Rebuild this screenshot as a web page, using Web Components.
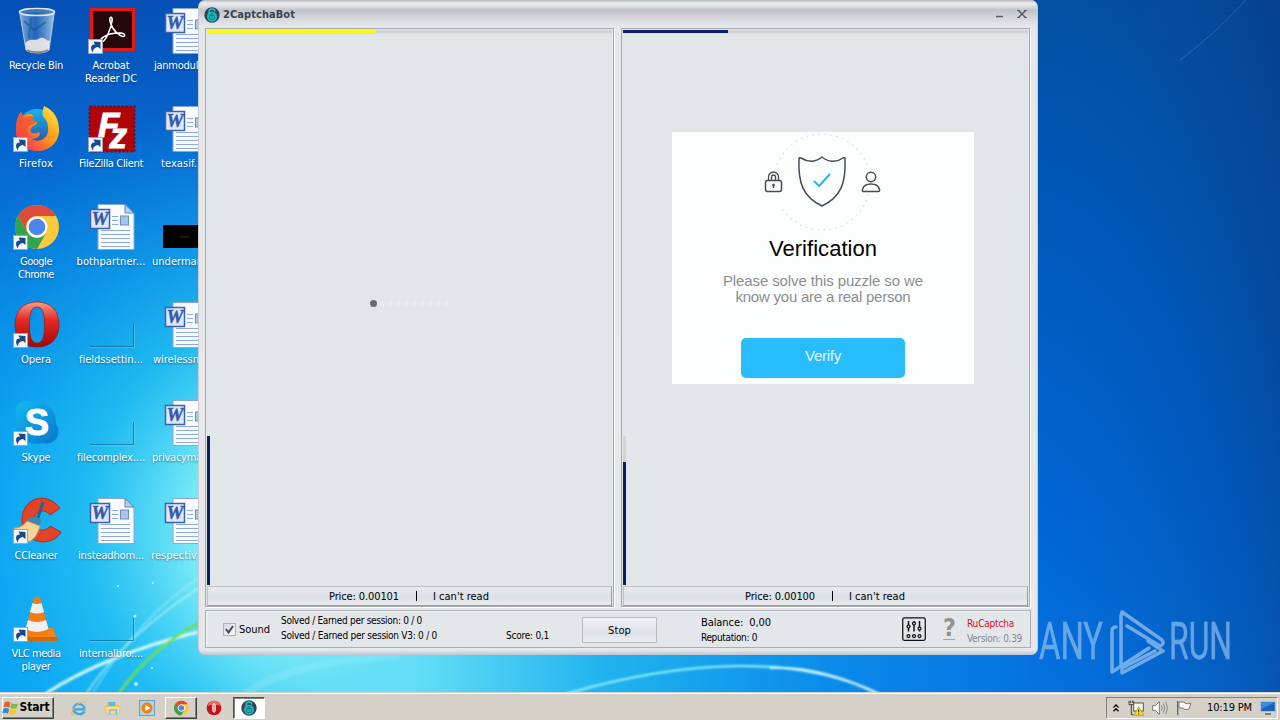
<!DOCTYPE html>
<html lang="en">
<head>
<meta charset="utf-8">
<title>Desktop</title>
<style>
    html, body {
        margin: 0;
        height: 100%;
        overflow: hidden;
        font-family: "DejaVu Sans Condensed", "DejaVu Sans", sans-serif;
        font-size: 11px;
        font-stretch: condensed;
    }
</style>
</head>
<body>
<win-desktop></win-desktop>

<script>
const shortcut = `
    <rect x="1.5" y="32.5" width="14" height="14" fill="#f4f6f9" stroke="#9aa6b5"/>
    <path d="M6 45.500 C2.500 41 4 37 8 37.500 L6.500 34.500 L13.500 35 L13.500 42 L11 40 C8 40.500 6 42 6 45.500 Z" fill="#164a8c"/>`;

const wordDoc = `
    <path d="M11 1.5 H38 L47 10 V46.5 H11 Z" fill="#f8fbff" stroke="#89a5d8"/>
    <path d="M38 1.5 V10 H47 Z" fill="#b9cdec" stroke="#6482b8"/>
    <rect x="33.500" y="13" width="8" height="9" fill="#a9c4e9" stroke="#6f8dc5"/>
    <path d="M25 13.5 H31 M25 17.500 H31 M25 21.500 H31 M14 27.500 H43 M14 31.500 H43 M14 35.500 H43 M14 39.500 H43 M14 43.500 H43" stroke="#8da9df"/>
    <rect x="3.500" y="6.500" width="19" height="19" fill="#dfe8f8" stroke="#3c5fae" stroke-width="1.500"/>
    <text x="4.500" y="22" textLength="17" lengthAdjust="spacingAndGlyphs" font-family="Liberation Serif, serif" font-size="18" font-weight="700" font-style="italic" fill="#3358a8" stroke="#3358a8" stroke-width=".4">W</text>`;

const blank = `
    <path d="M3 45.500 H46.500 V23" fill="none" stroke="#06517e" stroke-opacity=".6"/>
    <path d="M3 46.500 H47.500 V23" fill="none" stroke="#a2e8ff" stroke-opacity=".3"/>`;

const chrome = `
    <circle cx="25" cy="24" r="22" fill="#fbc93c"/>
    <path d="M5.9 13 A22 22 0 0 1 44.1 13 H25 A11 11 0 0 0 15.500 29.500 Z" fill="#df4b3b"/>
    <path d="M5.900 13 A22 22 0 0 0 25 46 L34.500 29.500 A11 11 0 0 1 15.500 29.500 Z" fill="#33a352"/>
    <circle cx="25" cy="24" r="10.500" fill="#fff"/><circle cx="25" cy="24" r="8.300" fill="#4c86ec"/>`;

const opera = `
    <defs><linearGradient id="o" x2="0" y2="1"><stop stop-color="#ff9a8b"/><stop offset=".4" stop-color="#e32a22"/><stop offset="1" stop-color="#9d0808"/></linearGradient></defs>
    <path fill-rule="evenodd" fill="url(#o)" stroke="#8e1010" stroke-width=".6" d="M25 1 C39 1 47 10 47 24 C47 38 39 46 25 46 C11 46 3 38 3 24 C3 10 11 1 25 1 Z M25 6 C19 6 17.500 13 17.500 24 C17.500 35 19 42 25 42 C31 42 32.500 35 32.500 24 C32.500 13 31 6 25 6 Z"/>`;

const lockBot = `
    <circle cx="24" cy="24" r="23" fill="#304550"/>
    <path d="M15 22 V16 A9 9 0 0 1 33 14 M17 22 V17" fill="none" stroke="#18c7cf" stroke-width="4"/>
    <circle cx="24" cy="29" r="15" fill="#18bcc5"/>
    <path d="M17 25 H31 V37 H17 Z M21 25 V20 H28 M24 29 V33" fill="none" stroke="#176a75" stroke-width="2.500"/>`;

const icons = {
    bin: `
        <defs><linearGradient id="g"><stop stop-color="#a9c8e5" stop-opacity=".8"/><stop offset=".45" stop-color="#3b79c0" stop-opacity=".5"/><stop offset="1" stop-color="#c3d8ea" stop-opacity=".85"/></linearGradient></defs>
        <path d="M7.500 4 H42.500 L37 43 C33 47 18 47 14 43 Z" fill="url(#g)" stroke="#b6cade"/>
        <path d="M13 36 C19 30 23 35 28 31 C33 30 34 34 38 34 L37 43 C33 47 18 47 14 43 Z" fill="#eeeae4" fill-opacity=".9"/>
        <path d="M15 43 C20 46 31 46 36 43" fill="none" stroke="#8b8375" stroke-width="2"/>
        <ellipse cx="25" cy="5" rx="17.500" ry="3.500" fill="#31679d" fill-opacity=".6" stroke="#dde9f2" stroke-width="1.500"/>
        <path d="M12 14 L22 23 L34 15 M19 11 L17 31" stroke="#164a85" stroke-opacity=".5" fill="none" stroke-width="2"/>`,
    acrobat: `
        <rect x="4.500" y="2.500" width="42" height="40" fill="#26070b" stroke="#e51a12" stroke-width="3"/>
        <path d="M15 35 C11 35 14 30 23 27 C32 25 39 26 37.500 29 C35 31 25 24 23 14 C22 9 26 9 25 14 C24 21 19 34 15 35 Z" fill="none" stroke="#fff" stroke-width="1.600"/>${shortcut}`,
    word: wordDoc,
    blank,
    firefox: `
        <defs><linearGradient id="f" x1="1" x2="0" y2="1"><stop stop-color="#fff342"/><stop offset=".45" stop-color="#ff9a18"/><stop offset="1" stop-color="#ed1766"/></linearGradient><linearGradient id="h" x2="0" y2="1"><stop stop-color="#14b6e8"/><stop offset="1" stop-color="#2948a9"/></linearGradient></defs>
        <circle cx="25" cy="23" r="19" fill="url(#h)"/>
        <path d="M32 1 C42 5 47 14 47 25 C47 38 37 46 25 46 C12 46 3 37 4 24 C4 16 6 10 9 7 C10 10 11 11 12 11 C16 8 19 9 22 11 L20 15 L25 17 C25 21 20 20 19 24 C17 27 21 30 27 27 C30 31 24 34 20 34 C27 39 38 33 36 22 C36 17 33 14 31 11 C30 7 31 4 32 1 Z" fill="url(#f)"/>
        <path d="M5 30 C3 20 5 12 9 7 L12 12 L22 11 L20 15 L25 17 L20 20 C11 22 16 32 24 34" fill="#f14b35" fill-opacity=".7"/>${shortcut}`,
    filezilla: `
        <rect x="2.500" y="1.500" width="45" height="45" fill="#b00609" stroke="#7b0508" stroke-width="2" stroke-dasharray="2 2"/>
        <text x="11" y="32" font-family="Liberation Sans, sans-serif" font-size="35" font-weight="700" font-style="italic" fill="#fff" stroke="#fff">F<tspan dx="-10" dy="11">z</tspan></text>${shortcut}`,
    chrome: chrome + shortcut,
    chromeMini: chrome,
    opera: opera + shortcut,
    operaMini: `
        <circle cx="24" cy="24" r="22" fill="#c5121a"/><path d="M6 18 A18 15 0 0 1 42 18 Q24 10 6 18" fill="#ee6b62"/>
        <ellipse cx="24" cy="24" rx="5.500" ry="14" fill="#fff"/><path d="M24 14 V34" stroke="#c94040" stroke-width="3"/>`,
    skype: `
        <defs><linearGradient id="s" x2="1" y2="1"><stop stop-color="#14b9f1"/><stop offset="1" stop-color="#0676cf"/></linearGradient></defs>
        <path d="M4 12 C4 4 12 0 20 3 C34 1 45 12 44 25 C50 34 44 47 31 44 C15 48 2 36 5 21 C4 18 3 15 4 12 Z" fill="url(#s)"/>
        <text x="13" y="36" font-family="Liberation Sans, sans-serif" font-size="36" font-weight="700" fill="#fff" stroke="#fff">S</text>${shortcut}`,
    black: `<rect x="1" y="22" width="47" height="23"/><path d="M18 34 H27" stroke="#303030"/>`,
    ccleaner: `
        <path d="M48 11 C38 -2 20 -2 13 11 C5 26 13 43 30 45 C39 45 46 41 49 35 L38 29 C33 36 23 34 22 25 C21 15 32 10 38 18 Z" fill="#e04327" stroke="#b52c19"/>
        <path d="M31 5 L26 21" stroke="#28628b" stroke-width="3"/><path d="M17 21 Q23 17 29 23 L28 29 L14 25 Z" fill="#3f87ad"/>
        <path d="M15 24 L28 29 C25 40 20 44 16 45 L2 31 C8 31 12 28 15 24 Z" fill="#f3d49a" stroke="#c89b5c"/>${shortcut}`,
    vlc: `
        <path d="M9 33 H41 L46 46 H12 L6 41 Z" fill="#f28413"/><path d="M9 42 H46 V46 H12 Z" fill="#d66607"/>
        <path d="M22 3 Q25 0 28 3 L37 36 Q25 44 13 36 Z" fill="#f47b0d"/>
        <path d="M20.500 8 Q25 10 29.500 8 L32 17 Q25 20 18 17 Z M16 25 Q25 29 34 25 L36.500 34 Q25 40 13.500 34 Z" fill="#eef0f1"/>${shortcut}`,
    flag: `
        <path d="M5 7 Q14 2 22 8 L19 23 Q11 18 2 22 Z" fill="#f05a28"/><path d="M25 10 Q34 15 45 10 L41 24 Q32 29 22 24 Z" fill="#80bd32"/>
        <path d="M1 26 Q10 22 18 27 L15 41 Q8 36 -2 40 Z" fill="#2e88d6"/><path d="M21 28 Q30 33 40 28 L37 42 Q28 47 18 42 Z" fill="#f9c51e"/>`,
    ie: `
        <path d="M40 34 C32 48 8 43 8 26 C8 7 40 7 40 28 H12" fill="none" stroke="#3fa7e3" stroke-width="7"/>
        <path d="M8 42 C-5 50 4 25 21 13 C35 3 49 -1 44 14" fill="none" stroke="#eebd37" stroke-width="3"/>`,
    folder: `
        <path d="M3 8 H18 L22 13 H43 V39 H3 Z" fill="#edcc67"/><path d="M10 6 H31 V20 H10 Z" fill="#63b6db"/>
        <path d="M2 19 H45 L43 42 H5 Z" fill="#f8df8d" stroke="#cfaa4c"/><path d="M14 45 V30 H34 V45" fill="none" stroke="#76bee5" stroke-width="5"/>`,
    media: `
        <rect x="2" y="2" width="44" height="44" fill="#b5dbf1" stroke="#5596c4" stroke-width="3"/>
        <circle cx="24" cy="24" r="17" fill="#f08314"/><path d="M19 14 L34 24 L19 34 Z" fill="#fff"/>`,
    lockBot,
    chevron: `<path d="M14 22 L24 12 L34 22 M14 37 L24 27 L34 37" fill="none" stroke="#000" stroke-width="5"/>`,
    network: `
        <path d="M3 3 V14 H17 V3 M7 2 V9 M13 2 V9 M10 15 V44 H17" fill="none" stroke="#444" stroke-width="3"/>
        <rect x="17" y="9" width="29" height="24" fill="#f5f5f5" stroke="#555" stroke-width="3"/>
        <path d="M32 20 L47 46 H17 Z" fill="#ffdc25" stroke="#a88a00" stroke-width="2"/><path d="M32 28 V37 M32 40 V43" stroke="#222" stroke-width="3"/>`,
    speaker: `
        <path d="M2 17 H10 L22 5 V43 L10 31 H2 Z" fill="#fff" stroke="#777" stroke-width="3"/>
        <path d="M28 16 Q34 24 28 32 M34 10 Q43 24 34 38 M40 5 Q52 24 40 43" fill="none" stroke="#8a8a8a" stroke-width="3"/>`,
    action: `<path d="M5 3 V46" stroke="#666" stroke-width="4"/><path d="M9 6 H25 L28 11 H45 L38 28 H24 L21 24 H9 Z" fill="#fff" stroke="#777" stroke-width="3"/>`,
    screen: `<path d="M2 5 H46 V35 H2 Z" fill="#1962bd" stroke="#b6cde1" stroke-width="3"/><path d="M4 7 H44 L4 27 Z" fill="#3f8ddf"/><path d="M15 42 H33" stroke="#555" stroke-width="4"/>`,
    sliders: `
        <rect x="1.500" y="1.500" width="45" height="45" rx="3" fill="none" stroke="#111" stroke-width="2.500"/>
        <path d="M13 8 V29 M24 8 V29 M35 8 V29" stroke="#111" stroke-width="3"/>
        <g fill="#e4e7e9" stroke="#111" stroke-width="2.500"><circle cx="13" cy="19" r="3"/><circle cx="24" cy="13" r="3"/><circle cx="35" cy="23" r="3"/><circle cx="13" cy="38" r="3"/><circle cx="24" cy="38" r="3"/><circle cx="35" cy="38" r="3"/></g>`,
};

/** Create an element class from a template string */
const define = (name, markup, setup) => {
    const template = document.createElement('template');
    template.innerHTML = markup.trim();
    customElements.define(name, class extends HTMLElement {
        connectedCallback() {
            if (this.shadowRoot) {
                return;
            }
            const root = this.attachShadow({ mode: 'open' });
            root.appendChild(template.content.cloneNode(true));
            if (setup) {
                setup(this, root);
            }
        }
    });
};

// One line of text, tracked to the width given in "w"
define('ui-text', `
    <style>
        :host { display: block; line-height: 13px; flex: none; }
        span { display: inline-block; white-space: pre; vertical-align: top; }
    </style>
    <span><slot></slot></span>
`, (host, root) => {
    const span = root.querySelector('span');
    const width = Number(host.getAttribute('w'));
    if (width) {
        const gap = (width - span.getBoundingClientRect().width) / host.textContent.length;
        span.style.letterSpacing = `${gap}px`;
    }
});

define('ui-icon', `
    <style>
        :host { display: block; flex: none; width: var(--size, 48px); height: var(--size, 48px); }
        svg { display: block; width: 100%; height: 100%; overflow: visible; }
    </style>
    <svg viewBox="0 0 48 48"></svg>
`, (host, root) => {
    root.querySelector('svg').innerHTML = icons[host.getAttribute('name')];
});

define('desktop-icon', `
    <style>
        :host { display: block; width: 72px; height: 98px; color: #fff; }
        ui-icon { margin: 7px 0 4px 12px; }
        .label { text-align: center; text-shadow: 0 1px 2px rgba(0, 40, 90, .6); }
        :host([left]) .label { text-align: left; }
    </style>
    <div class="label"><slot></slot></div>
`, (host, root) => {
    const label = root.querySelector('.label');
    const icon = document.createElement('ui-icon');
    icon.setAttribute('name', host.getAttribute('icon'));
    root.insertBefore(icon, label);
    if (host.hasAttribute('left')) {
        label.style.paddingLeft = `${host.getAttribute('left')}px`;
    }
});

define('wall-paper', `
    <style>
        :host { display: block; position: absolute; inset: 0; }
        svg { display: block; }
    </style>
    <svg width="1280" height="720" viewBox="0 0 1280 720">
        <defs>
            <linearGradient id="base" x1="0" y1="0" x2="0" y2="1">
                <stop stop-color="#0650b6"/><stop offset=".2" stop-color="#0666cf"/>
                <stop offset=".6" stop-color="#0496ef"/><stop offset="1" stop-color="#03a0f8"/>
            </linearGradient>
            <radialGradient id="glow" gradientUnits="userSpaceOnUse" cx="310" cy="530" r="450">
                <stop stop-color="#b5f8f7"/><stop offset=".27" stop-color="#75e9f7"/>
                <stop offset=".5" stop-color="#27c5f2" stop-opacity=".78"/><stop offset="1" stop-color="#079cee" stop-opacity="0"/>
            </radialGradient>
            <linearGradient id="right" x1="0" y1="0" x2="0" y2="1">
                <stop stop-color="#04418c"/><stop offset=".3" stop-color="#014ea9"/>
                <stop offset=".7" stop-color="#0060cf"/><stop offset="1" stop-color="#0873e1"/>
            </linearGradient>
            <linearGradient id="edge"><stop stop-color="#0078e8" stop-opacity=".25"/><stop offset="1" stop-color="#06418c" stop-opacity=".55"/></linearGradient>
            <linearGradient id="floor">
                <stop stop-color="#7ce9f7" stop-opacity="0"/><stop offset=".25" stop-color="#66dff6"/>
                <stop offset=".48" stop-color="#20b3ef"/><stop offset=".75" stop-color="#0a8ae9"/><stop offset=".98" stop-color="#0672e2"/>
            </linearGradient>
            <filter id="soft"><feGaussianBlur stdDeviation=".9"/></filter>
        </defs>
        <rect width="1280" height="720" fill="url(#base)"/>
        <rect width="760" height="720" fill="url(#glow)"/>
        <rect x="198" y="650" width="850" height="70" fill="url(#floor)"/>
        <rect x="1030" width="250" height="720" fill="url(#right)"/>
        <rect x="1030" width="250" height="720" fill="url(#edge)"/>
        <path d="M1180 60 Q1220 30 1250 -5" stroke="#5687bd" stroke-opacity=".5" fill="none"/>
        <g fill="none" filter="url(#soft)">
            <path d="M45 694 Q105 655 198 632" stroke="#d8fbff" stroke-width="3"/>
            <path d="M86 694 Q125 635 202 586" stroke="#b9f3fb" stroke-opacity=".7" stroke-width="2"/>
            <path d="M92 694 Q140 615 202 576" stroke="#b9f3fb" stroke-opacity=".5" stroke-width="1.500"/>
            <path d="M118 694 Q155 644 202 622" stroke="#70df4e" stroke-width="2.500"/>
            <path d="M565 694 Q760 638 880 694" stroke="#9af4ff" stroke-width="2"/>
            <path d="M770 668 Q820 666 876 693" stroke="#dffcff" stroke-width="2"/>
            <path d="M245 694 Q290 662 400 655" stroke="#a4f1f8" stroke-opacity=".25" stroke-width="8"/>
        </g>
        <g fill="#d9fcff" fill-opacity=".8">
            <circle cx="118" cy="586" r="1"/><circle cx="153" cy="583" r="1"/><circle cx="135" cy="616" r="1.500"/>
            <circle cx="152" cy="668" r="1"/><circle cx="136" cy="684" r="2"/><circle cx="167" cy="560" r="1"/>
        </g>
    </svg>
`);

define('brand-mark', `
    <style>
        :host { display: block; position: absolute; left: 1036px; top: 606px; opacity: .65; }
        svg { display: block; overflow: visible; }
        text { font: 400 52px Roboto, sans-serif; fill: #9cc6f1; stroke: #9cc6f1; stroke-width: .5; }
    </style>
    <svg width="210" height="80" viewBox="0 0 210 80">
        <text x="3" y="53" textLength="64" lengthAdjust="spacingAndGlyphs">ANY</text>
        <text x="133" y="53" textLength="63" lengthAdjust="spacingAndGlyphs">RUN</text>
        <g fill="none" stroke="#a9cef3" stroke-width="3.500" stroke-linejoin="round" stroke-linecap="round">
            <path d="M80 22 C76 22 76 24 76 27 V67 L113 43" transform="translate(0 -1)"/>
            <path d="M85 58 V10 L86 6 L126 34 Q129 38 124 40 L91 20"/>
            <path d="M86 65 L127 43 L112 33 M86 65 V60 L119 43" transform="translate(0 2)"/>
        </g>
    </svg>
`);

define('captcha-panel', `
    <style>
        :host {
            display: flex; flex-direction: column; box-sizing: border-box;
            width: 409px; height: 579px; padding: 1px 1px 0;
            border: 1px solid #a5a9b1; background: #e2e6e9; box-shadow: 1px 1px 0 #fff;
        }
        .progress { height: 3px; flex: none; background: #d1d2d2; border-bottom: 1px solid #dadcdd; }
        .progress i { display: block; height: 100%; width: var(--done); background: var(--tone); }
        .body { display: flex; flex: auto; }
        .meter { display: flex; flex-direction: column; justify-content: flex-end; width: 3px; margin-right: 46px; }
        .meter i { display: block; }
        .track { height: var(--rest); background: #d2d3d3; }
        .fill { height: var(--level); background: #0c1e5e; }
        .price {
            display: flex; align-items: center; box-sizing: border-box; height: 20px; margin-top: 1px; padding-left: 121px;
            border: 1px solid #bdc1c9; border-right-color: #979ba3; border-bottom-color: #979ba3;
            background: linear-gradient(#e9ebee, #dcdfe5 55%, #e8eaed);
        }
        .bar { width: 1px; height: 10px; margin: 0 16px 0 17px; background: #000; }
    </style>
    <div class="progress"><i></i></div>
    <div class="body">
        <div class="meter"><i class="track"></i><i class="fill"></i></div>
        <slot></slot>
    </div>
    <div class="price"><slot name="price"></slot><i class="bar"></i><ui-text w="56">I can't read</ui-text></div>
`);

define('loading-dots', `
    <style>
        :host { display: flex; align-items: center; gap: 3px; height: 8px; margin: 265px 0 0 114px; }
        i { width: 5px; height: 5px; border-radius: 50%; background: #e8ecee; }
        i:first-of-type { width: 7px; height: 7px; background: #696b6d; }
    </style>
    <i></i><i></i><i></i><i></i><i></i><i></i><i></i><i></i><i></i><i></i>
`);

define('verify-card', `
    <style>
        :host {
            display: flex; flex-direction: column; align-items: center; box-sizing: border-box;
            width: 302px; height: 252px; margin-top: 98px; background: #fcfefe;
            font-family: "Liberation Sans", Arial, sans-serif; font-stretch: normal;
        }
        svg { display: block; flex: none; }
        h2 { margin: 4px 0 11px; font-size: 22px; font-weight: 400; color: #000; }
        h2 ui-text { line-height: 26px; }
        p { display: flex; flex-direction: column; align-items: center; margin: 0; font-size: 15px; color: #8b8e91; }
        p ui-text { line-height: 16px; }
        button {
            display: flex; justify-content: center; box-sizing: border-box; width: 164px; height: 40px; margin-top: 33px; padding: 9px 0 0;
            border: 0; border-radius: 5px; background: #27bdff; color: #e5f7ff; font: 15px "Liberation Sans", Arial, sans-serif;
        }
        button ui-text { height: 31px; line-height: 17px; }
    </style>
    <svg width="302" height="100" viewBox="0 0 302 100" fill="none" stroke="#494a55" stroke-width="1.500" stroke-linejoin="round">
        <circle cx="150" cy="50" r="48" stroke="#e4e7ea" stroke-dasharray="2 4"/>
        <rect x="93" y="37" width="17" height="36" fill="#fcfefe" stroke="none"/>
        <rect x="189" y="37" width="19" height="24" fill="#fcfefe" stroke="none"/>
        <path d="M127 27 Q127 25 129 26 C137 31 144 30 150 25 C156 30 164 31 171 26 Q173 25 173 27 C174 51 169 65 150 74 C131 65 126 51 127 27 Z"/>
        <path d="M142 49 L147 54 L158 42" stroke="#31b4ea" stroke-width="2"/>
        <rect x="93.500" y="48.500" width="16" height="11" rx="2"/>
        <path d="M96.500 48 V45 A5 5 0 0 1 106.500 45 V48 M99.500 48 V45 A2 2 0 0 1 103.500 45 V48" stroke-width="1.300"/>
        <circle cx="101.500" cy="53" r=".6"/><path d="M101.500 53 V56"/>
        <circle cx="199" cy="45" r="4.700"/>
        <path d="M191.500 59.500 Q190 59.500 190.500 57.500 C192 50 206 50 207.500 57.500 Q208 59.500 206.500 59.500 Z"/>
    </svg>
    <h2><ui-text w="108">Verification</ui-text></h2>
    <p><ui-text w="200">Please solve this puzzle so we</ui-text><ui-text w="175">know you are a real person</ui-text></p>
    <button><ui-text w="36">Verify</ui-text></button>
`);

define('session-bar', `
    <style>
        :host {
            display: flex; box-sizing: border-box; width: 826px; height: 38px; margin-top: 3px;
            border: 1px solid #a9adb5; background: #e4e7ea; color: #000; font-size: 10px; box-shadow: inset 1px 1px 0 #f3f4f6;
        }
        .check { display: flex; align-items: center; gap: 3px; width: 58px; padding: 1px 0 0 17px; font-size: 11px; }
        .box { width: 11px; height: 11px; border: 1px solid #a9b2c0; background: linear-gradient(135deg, #d4dae2, #f7f8fa); }
        .box svg { display: block; }
        .stats { width: 225px; padding-top: 3px; }
        .stats ui-text { height: 15px; }
        .score { width: 76px; padding-top: 18px; }
        button {
            display: flex; align-items: center; justify-content: center; box-sizing: border-box; width: 75px; height: 26px; margin-top: 6px; padding: 0;
            border: 1px solid #b6bcc8; border-radius: 1px; background: linear-gradient(#eff1f4, #dfe2e8 60%, #eaecf0);
            font: inherit; font-size: 11px; color: #000;
        }
        .account { width: 201px; padding: 5px 0 0 44px; box-sizing: border-box; margin-right: 43px; }
        .account ui-text { height: 15px; }
        .account ui-text:first-of-type { font-size: 11px; }
        .sliders { --size: 24px; margin: 6px 15px 0 1px; }
        .help { width: 17px; margin: 6px 9px 0 0; overflow: visible; }
        .help text { font: 700 25px "DejaVu Sans Condensed", sans-serif; fill: #8f9297; }
        .links { padding-top: 6px; }
        .links ui-text { height: 15px; color: #e00d14; }
        .links ui-text + ui-text { color: #85888d; }
    </style>
    <div class="check">
        <span class="box"><svg width="11" height="11"><path d="M2 5 L4.500 8.500 L9 2" fill="none" stroke="#454c58" stroke-width="2"/></svg></span>
        <ui-text w="31">Sound</ui-text>
    </div>
    <div class="stats"><ui-text w="141">Solved / Earned per session: 0 / 0</ui-text><ui-text w="156">Solved / Earned per session V3: 0 / 0</ui-text></div>
    <div class="score"><ui-text w="43">Score: 0,1</ui-text></div>
    <button><ui-text w="23">Stop</ui-text></button>
    <div class="account"><ui-text w="70">Balance:  0,00</ui-text><ui-text w="56">Reputation: 0</ui-text></div>
    <ui-icon class="sliders" name="sliders"></ui-icon>
    <svg class="help" width="17" height="24"><text x="2" y="19" textLength="13" lengthAdjust="spacingAndGlyphs">?</text><path d="M2 22.500 H14" stroke="#a0a3a7"/></svg>
    <div class="links"><ui-text w="47">RuCaptcha</ui-text><ui-text w="55">Version: 0.39</ui-text></div>
`);

define('bot-window', `
    <style>
        :host {
            display: block; position: absolute; left: 198px; top: 0; box-sizing: border-box; width: 840px; height: 655px;
            padding: 0 7px; border: 1px solid #c9c9cf; border-width: 0 1px; border-radius: 7px;
            background: linear-gradient(#b8b8bf, #ececef 3px, #e0e1e4 6px, #c0c3ca 10px, #d0d2d7 16px, #e6e7e9 26px, #e7e8ea 650px, #bcc6d3);
        }
        header { display: flex; height: 28px; align-items: center; color: #3a434e; font-weight: 700; }
        header ui-icon { --size: 16px; margin: 1px 3px 0 -2px; }
        .actions { margin-left: auto; padding-right: 3px; }
        .actions svg { display: block; }
        main { display: flex; gap: 7px; margin: 0 -1px; }
        session-bar { margin-left: -1px; }
        .left { --done: 169px; --tone: #fafb12; --level: 149px; --rest: 0; }
        .right { --done: 105px; --tone: #0c1e68; --level: 123px; --rest: 26px; }
    </style>
    <header>
        <ui-icon name="lockBot"></ui-icon>
        <ui-text w="72">2CaptchaBot</ui-text>
        <div class="actions"><svg width="32" height="14" fill="none" stroke="#59606b" stroke-width="1.500"><path d="M1 9.500 H8 M23.500 3.500 L30.500 10.500 M30.500 3.500 L23.500 10.500"/><path d="M22 3.500 H25 M29 3.500 H32 M22 10.500 H25 M29 10.500 H32" stroke-width="1"/></svg></div>
    </header>
    <main>
        <captcha-panel class="left"><loading-dots></loading-dots><ui-text slot="price" w="70">Price: 0.00101</ui-text></captcha-panel>
        <captcha-panel class="right"><verify-card></verify-card><ui-text slot="price" w="70">Price: 0.00100</ui-text></captcha-panel>
    </main>
    <session-bar></session-bar>
`);

define('task-bar', `
    <style>
        :host {
            display: flex; align-items: center; box-sizing: border-box; position: absolute; left: 0; bottom: 0; width: 1280px; height: 28px;
            padding: 2px 2px 0; background: #d5d0c8; border-top: 1px solid #d5d0c8; box-shadow: inset 0 1px 0 #fff; color: #000;
        }
        .button {
            display: flex; align-items: center; justify-content: center; box-sizing: border-box; height: 22px; width: 32px;
            border: 1px solid; border-color: #fff #404040 #404040 #fff; box-shadow: inset -1px -1px 0 #808080;
        }
        .start { width: 52px; gap: 1px; padding-right: 4px; margin-right: 17px; font-weight: 700; font-size: 12px; }
        .pressed { border-color: #505050 #fff #fff #505050; box-shadow: inset 1px 1px 0 #808080; background: #fff; }
        ui-icon { --size: 16px; }
        .quick { margin-right: 18px; }
        .media { margin-right: 10px; }
        .opera { margin: 0 11px 0 9px; }
        .tray {
            display: flex; align-items: center; gap: 8px; box-sizing: border-box; width: 172px; height: 22px; margin-left: auto;
            padding-left: 4px; border: 1px solid; border-color: #808080 #fff #fff #808080;
        }
        .tray ui-icon:first-of-type { --size: 12px; margin-right: -2px; margin-left: -1px; }
        .tray ui-text { margin: 0 0 0 7px; }
    </style>
    <div class="button start"><ui-icon name="flag"></ui-icon><ui-text w="30">Start</ui-text></div>
    <ui-icon class="quick" name="ie"></ui-icon>
    <ui-icon class="quick" name="folder"></ui-icon>
    <ui-icon class="media" name="media"></ui-icon>
    <div class="button"><ui-icon name="chromeMini"></ui-icon></div>
    <ui-icon class="opera" name="operaMini"></ui-icon>
    <div class="button pressed"><ui-icon name="lockBot"></ui-icon></div>
    <div class="tray">
        <ui-icon name="chevron"></ui-icon>
        <ui-icon name="network"></ui-icon>
        <ui-icon name="speaker"></ui-icon>
        <ui-icon name="action"></ui-icon>
        <ui-text w="45">10:19 PM</ui-text>
        <ui-icon name="screen"></ui-icon>
    </div>
`);

define('win-desktop', `
    <style>
        :host { display: block; position: relative; width: 1280px; height: 720px; overflow: hidden; }
        .icons { position: relative; display: grid; grid-template-columns: repeat(3, 75px); grid-template-rows: repeat(7, 98px); grid-auto-flow: column; width: 225px; }
    </style>
    <wall-paper></wall-paper>
    <div class="icons">
        <desktop-icon icon="bin"><ui-text w="54">Recycle Bin</ui-text></desktop-icon>
        <desktop-icon icon="firefox"><ui-text w="34">Firefox</ui-text></desktop-icon>
        <desktop-icon icon="chrome"><ui-text w="32">Google</ui-text><ui-text w="36">Chrome</ui-text></desktop-icon>
        <desktop-icon icon="opera"><ui-text w="30">Opera</ui-text></desktop-icon>
        <desktop-icon icon="skype"><ui-text w="29">Skype</ui-text></desktop-icon>
        <desktop-icon icon="ccleaner"><ui-text w="43">CCleaner</ui-text></desktop-icon>
        <desktop-icon icon="vlc"><ui-text w="49">VLC media</ui-text><ui-text w="29">player</ui-text></desktop-icon>
        <desktop-icon icon="acrobat"><ui-text w="37">Acrobat</ui-text><ui-text w="52">Reader DC</ui-text></desktop-icon>
        <desktop-icon icon="filezilla"><ui-text w="64">FileZilla Client</ui-text></desktop-icon>
        <desktop-icon icon="word"><ui-text w="69">bothpartner...</ui-text></desktop-icon>
        <desktop-icon icon="blank"><ui-text w="64">fieldssettin...</ui-text></desktop-icon>
        <desktop-icon icon="blank"><ui-text w="68">filecomplex....</ui-text></desktop-icon>
        <desktop-icon icon="word"><ui-text w="66">insteadhom...</ui-text></desktop-icon>
        <desktop-icon icon="blank"><ui-text w="64">internalbro....</ui-text></desktop-icon>
        <desktop-icon icon="word" left="4"><ui-text w="50">janmodule</ui-text></desktop-icon>
        <desktop-icon icon="word" left="11"><ui-text w="36">texasif.</ui-text></desktop-icon>
        <desktop-icon icon="black" left="2"><ui-text w="51">underman</ui-text></desktop-icon>
        <desktop-icon icon="word" left="3"><ui-text w="46">wirelessn</ui-text></desktop-icon>
        <desktop-icon icon="word" left="2"><ui-text w="50">privacyma</ui-text></desktop-icon>
        <desktop-icon icon="word" left="1"><ui-text w="46">respectiv</ui-text></desktop-icon>
    </div>
    <brand-mark></brand-mark>
    <bot-window></bot-window>
    <task-bar></task-bar>
`);
</script>
</body>
</html>
